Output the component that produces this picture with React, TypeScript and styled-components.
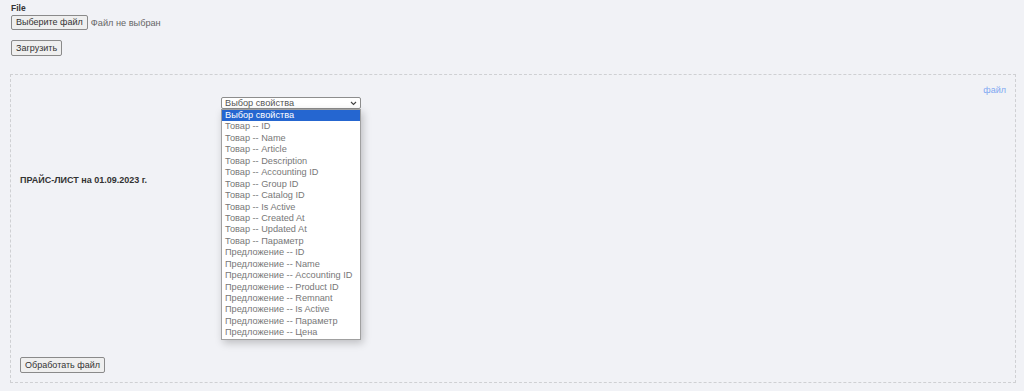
import styled, { createGlobalStyle } from 'styled-components';

const GlobalStyle = createGlobalStyle`
  html, body {
    margin: 0;
    background: #f1f2f6;
  }
  body {
    font-family: "Liberation Sans", Arial, sans-serif;
    color: #333;
  }
`;

const Page = styled.div`
  padding: 3px 8px 0 11px;
  height: 391px;
  box-sizing: border-box;
`;

const Label = styled.div`
  font-size: 8.5px;
  font-weight: bold;
  line-height: 10px;
  height: 12px;
`;

const FileRow = styled.div`
  display: flex;
  align-items: center;
  gap: 3px;
  height: 15px;
`;

const Button = styled.button`
  font-family: "Liberation Sans", Arial, sans-serif;
  font-size: 9px;
  color: #333;
  background: #efefef;
  border: 1px solid #8a8a8a;
  border-radius: 2px;
  padding: 0 4px;
  height: ${p => (p.$tall ? 16 : 15)}px;
  line-height: 1;
`;

const Hint = styled.span`
  font-size: 9.2px;
  color: #666;
`;

const UploadRow = styled.div`
  margin-top: 10px;
  line-height: 0;
`;

const Card = styled.div`
  margin-top: 18px;
  margin-left: -1px;
  width: 1006px;
  height: 309px;
  box-sizing: border-box;
  border: 1px dashed #cfd0d3;
  padding: 11px 9px 9px 9px;
  display: flex;
  flex-direction: column;
`;

const Row = styled.div`
  display: grid;
  grid-template-columns: 201px 1fr auto;
  height: 188px;
`;

const Title = styled.div`
  align-self: center;
  font-size: 9px;
  font-weight: bold;
  color: #333;
`;

const SelectWrap = styled.div`
  position: relative;
  margin-top: 11px;
  width: 140px;
  align-self: start;
`;

const SelectBox = styled.div`
  height: 12px;
  box-sizing: border-box;
  border: 1px solid #8d8d8d;
  border-radius: 2px;
  background: #fff;
  font-size: 9.2px;
  line-height: 10px;
  padding: 0 3px;
  color: #555;
  display: flex;
  align-items: center;
  justify-content: space-between;
`;

const List = styled.div`
  position: absolute;
  top: 12px;
  left: 0;
  width: 140px;
  box-sizing: border-box;
  background: #fff;
  border: 1px solid #a0a0a0;
  box-shadow: 2px 3px 8px rgba(0, 0, 0, 0.22);
  z-index: 2;
`;

const Option = styled.div`
  font-size: 9.2px;
  line-height: 11.45px;
  height: 11.45px;
  padding-left: 3px;
  white-space: nowrap;
  color: ${p => (p.$active ? '#fff' : '#777')};
  background: ${p => (p.$active ? '#2566d0' : 'transparent')};
`;

const Link = styled.a`
  align-self: start;
  font-size: 9px;
  color: #7fa8f2;
  text-decoration: none;
  line-height: 10px;
  margin-top: -1px;
`;

const Footer = styled.div`
  margin-top: auto;
  line-height: 0;
`;

const options = [
  'Выбор свойства',
  'Товар -- ID',
  'Товар -- Name',
  'Товар -- Article',
  'Товар -- Description',
  'Товар -- Accounting ID',
  'Товар -- Group ID',
  'Товар -- Catalog ID',
  'Товар -- Is Active',
  'Товар -- Created At',
  'Товар -- Updated At',
  'Товар -- Параметр',
  'Предложение -- ID',
  'Предложение -- Name',
  'Предложение -- Accounting ID',
  'Предложение -- Product ID',
  'Предложение -- Remnant',
  'Предложение -- Is Active',
  'Предложение -- Параметр',
  'Предложение -- Цена',
];

const Chevron = () => (
  <svg width="7" height="5" viewBox="0 0 7 5">
    <path d="M1 1l2.5 2.5L6 1" fill="none" stroke="#444" strokeWidth="1.1" />
  </svg>
);

export default function App() {
  return (
    <Page>
      <GlobalStyle />
      <Label>File</Label>
      <FileRow>
        <Button>Выберите файл</Button>
        <Hint>Файл не выбран</Hint>
      </FileRow>
      <UploadRow>
        <Button $tall>Загрузить</Button>
      </UploadRow>
      <Card>
        <Row>
          <Title>ПРАЙС-ЛИСТ на 01.09.2023 г.</Title>
          <SelectWrap>
            <SelectBox>
              <span>Выбор свойства</span>
              <Chevron />
            </SelectBox>
            <List>
              {options.map((o, i) => (
                <Option key={o} $active={i === 0}>{o}</Option>
              ))}
            </List>
          </SelectWrap>
          <Link href="#">файл</Link>
        </Row>
        <Footer>
          <Button $tall>Обработать файл</Button>
        </Footer>
      </Card>
    </Page>
  );
}
